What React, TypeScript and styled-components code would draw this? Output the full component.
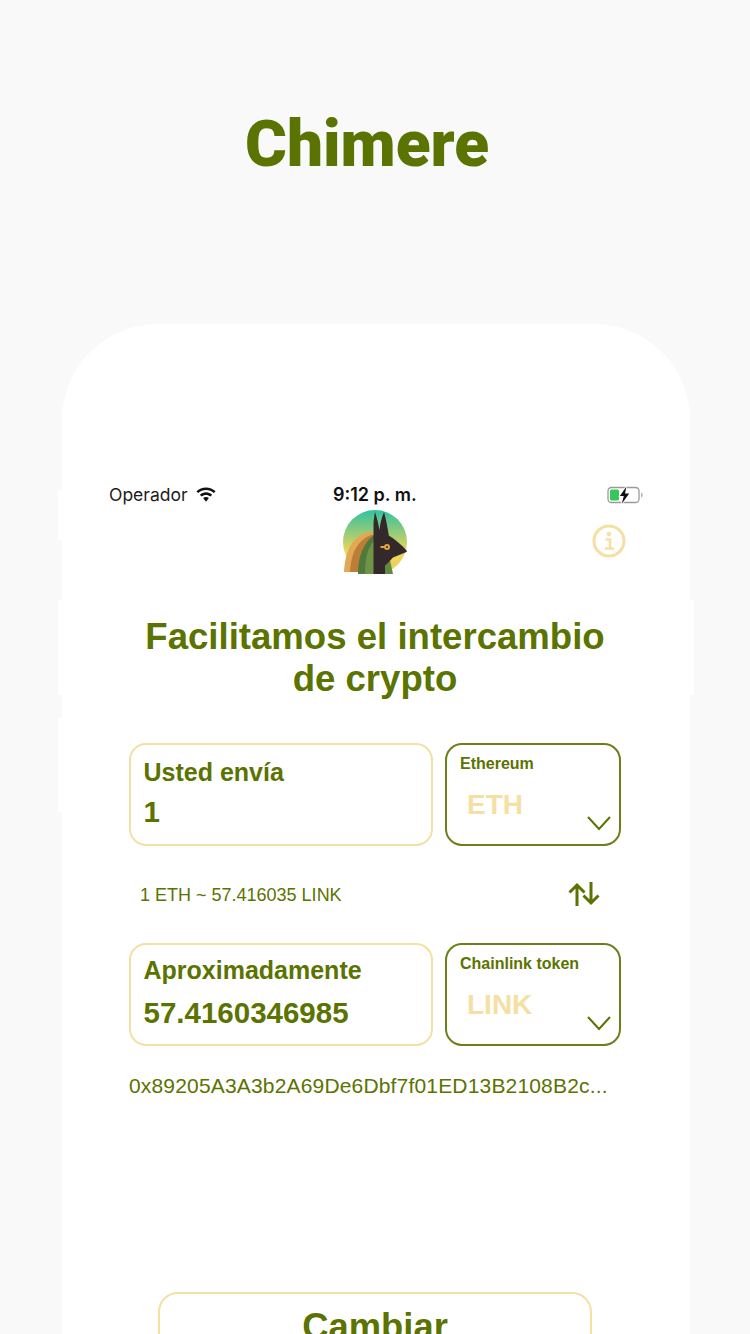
import styled, { createGlobalStyle } from 'styled-components';

const GREEN = '#5b7300';
const SAND = '#f5e0a3';

const GlobalStyle = createGlobalStyle`
  html, body {
    margin: 0;
    padding: 0;
    height: 1334px;
    overflow: hidden;
    background: #f9f9f9;
  }
  * {
    box-sizing: border-box;
  }
`;

const Page = styled.div`
  width: 750px;
  height: 1334px;
  overflow: hidden;
  padding-top: 104px;
  font-family: 'Liberation Sans', Arial, sans-serif;
  color: ${GREEN};
`;

const Title = styled.h1`
  margin: 0 0 0 -16px;
  height: 220px;
  padding-top: 2px;
  font-family: Roboto, sans-serif;
  font-size: 64px;
  line-height: 78px;
  font-weight: 900;
  text-align: center;
`;

const Phone = styled.main`
  position: relative;
  width: 628px;
  height: 1100px;
  margin-left: 62px;
  padding: 159px 47px 0;
  background: #fff;
  border-radius: 96px 96px 0 0;
`;

const SideButton = styled.span<{ $side: 'left' | 'right'; $top: number; $height: number }>`
  position: absolute;
  ${props => props.$side}: -4px;
  top: ${props => props.$top}px;
  width: 4px;
  height: ${props => props.$height}px;
  background: #fff;
`;

const StatusBar = styled.div`
  position: relative;
  display: flex;
  align-items: center;
  justify-content: space-between;
  height: 24px;
`;

const Carrier = styled.div`
  display: flex;
  align-items: center;
  gap: 7px;
  font-family: Inter, sans-serif;
  font-size: 17.5px;
  line-height: 22px;
  color: #1c1c1c;
`;

const Clock = styled.div`
  position: absolute;
  left: 224px;
  top: 0;
  font-family: Inter, sans-serif;
  font-size: 18px;
  line-height: 24px;
  font-weight: 600;
  color: #111;
  white-space: nowrap;
`;

const LogoRow = styled.div`
  position: relative;
  display: flex;
  justify-content: center;
  height: 66px;
  margin: 2px 2px 0 0;
`;

const InfoButton = styled.div`
  position: absolute;
  top: 15px;
  right: 15px;
  width: 34px;
  height: 34px;
`;

const Headline = styled.h2`
  margin: 41px 0 43px -2px;
  font-size: 36.6px;
  line-height: 42px;
  font-weight: 700;
  text-align: center;
`;

const Form = styled.div`
  margin: 0 20px;
`;

const ExchangeRow = styled.div`
  display: flex;
  gap: 12px;
  height: 103px;
`;

const AmountBox = styled.div`
  flex: 0 0 304px;
  padding: 12px 12.5px;
  border: 2px solid ${SAND};
  border-radius: 17px;
`;

const AmountLabel = styled.div<{ $compact?: boolean }>`
  margin: ${props => (props.$compact ? '-2px 0 11px' : '0')};
  font-size: 25px;
  line-height: 30px;
  font-weight: 700;
`;

const AmountValue = styled.div`
  margin-top: 8px;
  font-size: 29.5px;
  line-height: 34px;
  font-weight: 700;
`;

const TokenBox = styled.div`
  position: relative;
  flex: 0 0 176px;
  padding: 10px 13px;
  border: 2px solid #6a8018;
  border-radius: 17px;
`;

const TokenName = styled.div`
  font-size: 16px;
  line-height: 18px;
  font-weight: 700;
`;

const TokenSymbol = styled.div`
  margin: 16px 0 0 7px;
  font-size: 28px;
  line-height: 32px;
  font-weight: 700;
  color: ${SAND};
`;

const Chevron = styled.svg`
  position: absolute;
  right: 8px;
  bottom: 13px;
  width: 24px;
  height: 16px;
`;

const RateRow = styled.div`
  display: flex;
  align-items: center;
  justify-content: space-between;
  height: 97px;
  padding: 2px 23px 0 11px;
  font-size: 18px;
`;

const SwapGlyph = styled.svg`
  width: 32px;
  height: 24px;
  margin-top: -3px;
`;

const Address = styled.div`
  margin-top: 28px;
  font-size: 21px;
  line-height: 24px;
  letter-spacing: 0.17px;
  white-space: nowrap;
`;

const SubmitButton = styled.button`
  display: flex;
  justify-content: center;
  align-items: flex-start;
  width: 434px;
  height: 90px;
  margin: 194px 0 0 49px;
  padding: 13px 0 0;
  border: 2px solid ${SAND};
  border-radius: 20px;
  background: #fff;
  color: ${GREEN};
  font-family: 'Liberation Sans', Arial, sans-serif;
  font-size: 36.4px;
  line-height: 40px;
  font-weight: 700;
`;

const WifiIcon = () => (
  <svg width="22" height="16" viewBox="0 0 22 16">
    <path
      d="M11 3.100c3 0 5.700 1.100 7.800 3l1.800-1.900C18 1.800 14.700.4 11 .4S4 1.800 1.400 4.200l1.800 1.900c2.100-1.900 4.800-3 7.800-3z"
      fill="#111"
    />
    <path
      d="M11 7.900c1.700 0 3.200.6 4.400 1.700l1.800-1.900C15.600 6.200 13.400 5.300 11 5.300S6.400 6.200 4.800 7.700l1.800 1.900C7.800 8.500 9.300 7.900 11 7.900z"
      fill="#111"
    />
    <path d="M11 10c-1.100 0-2.100.4-2.900 1.100L11 14.800l2.900-3.700C13.100 10.400 12.100 10 11 10z" fill="#111" />
  </svg>
);

const BatteryIcon = () => (
  <svg width="36" height="18" viewBox="0 0 36 18">
    <rect x="1" y="1.500" width="31" height="15" rx="3.500" fill="none" stroke="#9a9a9a" strokeWidth="1.300" />
    <rect x="3" y="3.500" width="9" height="11" rx="1.500" fill="#35c759" />
    <path d="M34 6.500c1.200.4 1.800 1.300 1.800 2.500s-.6 2.100-1.800 2.500z" fill="#b5b5b5" />
    <path
      d="M19.500.5 12.800 10h4l-2 7.800 7.400-10.300h-4.200z"
      fill="#111"
      stroke="#fff"
      strokeWidth="1.600"
      paintOrder="stroke"
    />
  </svg>
);

const AnubisLogo = () => (
  <svg width="66" height="66" viewBox="0 0 66 66">
    <defs>
      <linearGradient id="sky" x1="0" y1="0" x2="0" y2="1">
        <stop offset="0" stopColor="#2fc2a0" />
        <stop offset="0.42" stopColor="#a9cd72" />
        <stop offset="0.66" stopColor="#f0d85e" />
        <stop offset="1" stopColor="#eccb55" />
      </linearGradient>
      <clipPath id="disc">
        <path d="M0 0h66v65H0z" />
      </clipPath>
    </defs>
    <g clipPath="url(#disc)">
      <circle cx="33" cy="33" r="32" fill="url(#sky)" />
    </g>
    <path d="M2 63C3 40 12 26 27 23h5v40z" fill="#e3a853" />
    <path d="M8 63c1-20 8-32 21-37h3v37z" fill="#bb7d38" />
    <path d="M16 65c0-18 6-32 16-39v39z" fill="#4f7a3c" />
    <path d="M23 65c0-16 3-27 9-33v33z" fill="#6f9448" />
    <path d="M43 57l5-6 3 14h-8z" fill="#5f8a42" />
    <path
      d="M33 3c1.800 5 3.200 11 4.500 18 .5-6 2-12 4.500-18 2 7 3.500 15 4.800 23.500 6 3.500 12.500 9 18.200 15.500l-.5 1L51 48.500 43 57v8H31.500V16c0-5 .8-9 1.500-13z"
      fill="#33292a"
    />
    <path d="M38.500 37h4v2h-4z" fill="#e3a240" />
    <circle cx="45" cy="38" r="3" fill="#e3a240" />
    <circle cx="45" cy="38" r="1" fill="#33292a" />
  </svg>
);

const InfoIcon = () => (
  <svg width="34" height="34" viewBox="0 0 34 34" fill="none" stroke={SAND}>
    <circle cx="17" cy="17" r="15" strokeWidth="3" />
    <circle cx="17" cy="10" r="2.300" fill={SAND} stroke="none" />
    <path d="M13.500 15.500H18V24M13 24.500h9" strokeWidth="2.600" />
  </svg>
);

const SwapIcon = () => (
  <SwapGlyph viewBox="0 0 32 24" fill="none" stroke={GREEN} strokeWidth="3">
    <path d="M9 24V3M1.500 10.500 9 3l7.500 7.500" />
    <path d="M23 0v21M15.500 13.500 23 21l7.500-7.500" />
  </SwapGlyph>
);

const ChevronDown = () => (
  <Chevron viewBox="0 0 24 16" fill="none" stroke={GREEN} strokeWidth="2">
    <path d="M1 2l11 12L23 2" />
  </Chevron>
);

const App = () => {
  return (
    <Page>
      <GlobalStyle />
      <Title>Chimere</Title>
      <Phone>
        <SideButton $side="left" $top={166} $height={50} />
        <SideButton $side="left" $top={276} $height={95} />
        <SideButton $side="left" $top={394} $height={94} />
        <SideButton $side="right" $top={276} $height={95} />

        <StatusBar>
          <Carrier>
            Operador
            <WifiIcon />
          </Carrier>
          <Clock>9:12 p. m.</Clock>
          <BatteryIcon />
        </StatusBar>

        <LogoRow>
          <AnubisLogo />
          <InfoButton>
            <InfoIcon />
          </InfoButton>
        </LogoRow>

        <Headline>
          Facilitamos el intercambio
          <br />
          de crypto
        </Headline>

        <Form>
          <ExchangeRow>
            <AmountBox>
              <AmountLabel>Usted envía</AmountLabel>
              <AmountValue>1</AmountValue>
            </AmountBox>
            <TokenBox>
              <TokenName>Ethereum</TokenName>
              <TokenSymbol>ETH</TokenSymbol>
              <ChevronDown />
            </TokenBox>
          </ExchangeRow>

          <RateRow>
            <span>1 ETH ~ 57.416035 LINK</span>
            <SwapIcon />
          </RateRow>

          <ExchangeRow>
            <AmountBox>
              <AmountLabel $compact>Aproximadamente</AmountLabel>
              <AmountValue>57.4160346985</AmountValue>
            </AmountBox>
            <TokenBox>
              <TokenName>Chainlink token</TokenName>
              <TokenSymbol>LINK</TokenSymbol>
              <ChevronDown />
            </TokenBox>
          </ExchangeRow>

          <Address>0x89205A3A3b2A69De6Dbf7f01ED13B2108B2c...</Address>
        </Form>

        <SubmitButton>Cambiar</SubmitButton>
      </Phone>
    </Page>
  );
};

export default App;
